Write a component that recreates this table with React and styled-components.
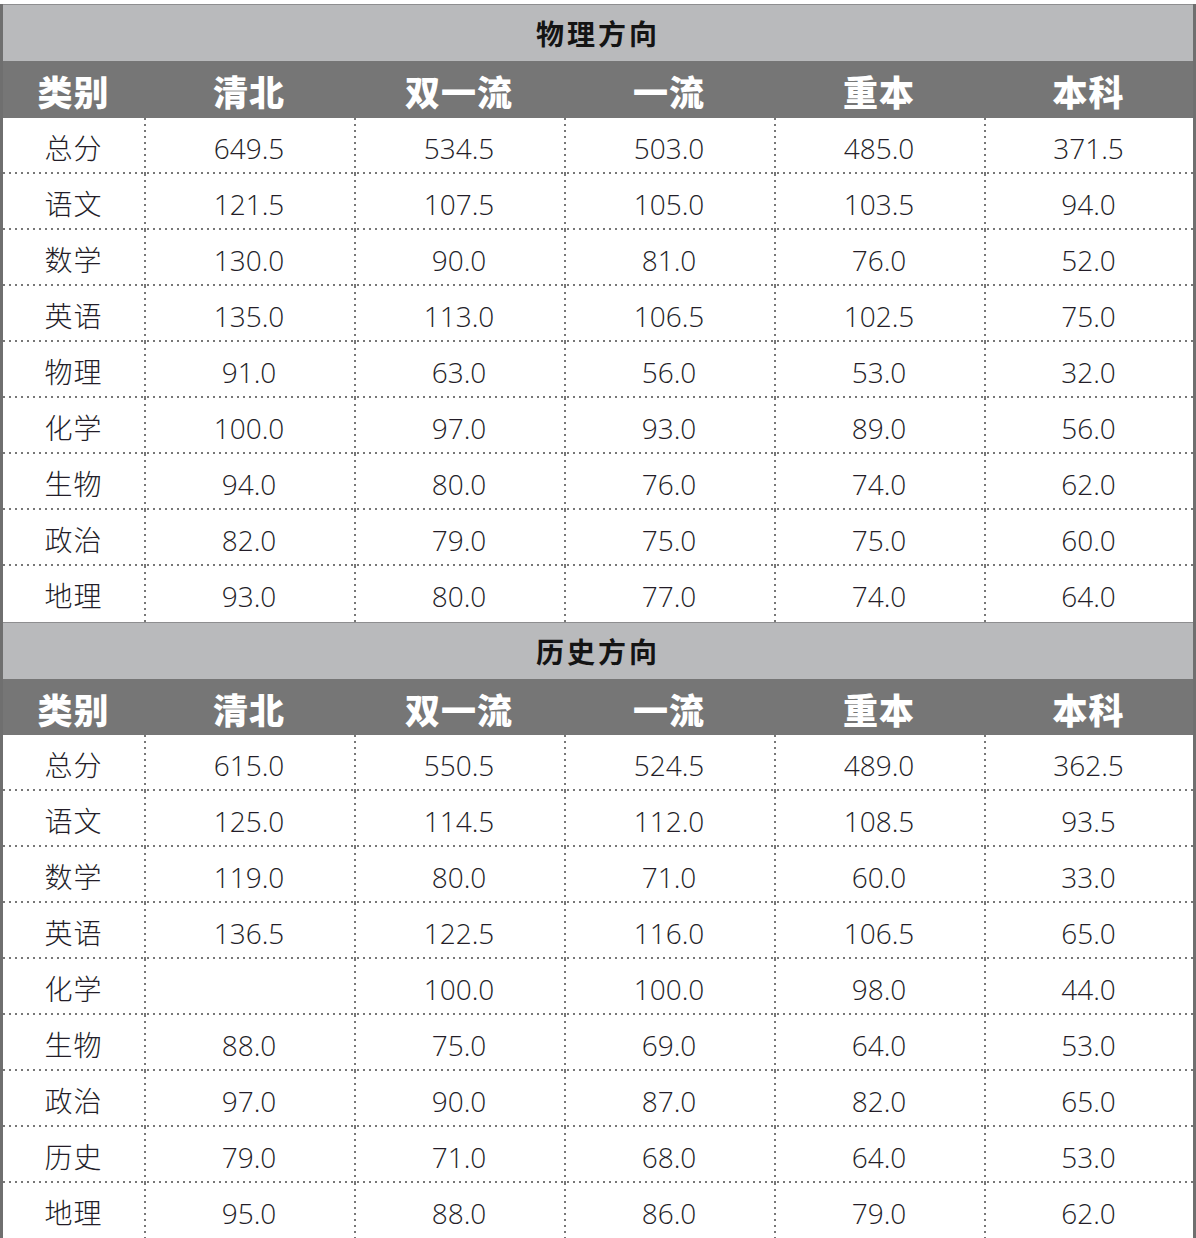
import React from "react";
import styled, { createGlobalStyle } from "styled-components";

const GlobalStyle = createGlobalStyle`
  html, body {
    margin: 0;
    padding: 0;
    background: #ffffff;
  }
  * {
    box-sizing: border-box;
  }
`;

const Page = styled.div`
  width: 1196px;
  height: 1238px;
  overflow: hidden;
  padding-top: 4px;
  background: #ffffff;
  font-family: "Noto Sans CJK SC", "Noto Sans", sans-serif;
`;

const Frame = styled.div`
  border-left: 3px solid #6f6f6f;
  border-right: 3px solid #6f6f6f;
`;

const TitleBar = styled.div`
  height: 57px;
  background: #b9babc;
  border-top: 1px solid #8e8e90;
  display: flex;
  align-items: center;
  justify-content: center;
  font-size: 28px;
  font-weight: 700;
  letter-spacing: 3px;
  color: #141414;
`;

const Grid = styled.div`
  display: grid;
  grid-template-columns: 141px repeat(4, 210px) 1fr;
`;

const HeaderRow = styled(Grid)`
  height: ${(props) => props.$height}px;
  background: #767676;
`;

const HeaderCell = styled.div`
  display: flex;
  align-items: center;
  justify-content: center;
  color: #ffffff;
  font-size: 35px;
  font-weight: 900;
  letter-spacing: 1px;
  padding-top: 2px;
`;

const Row = styled(Grid)`
  height: 56px;
  background-image: ${(props) =>
    props.$last
      ? "none"
      : "repeating-linear-gradient(to right, #777 0 2px, transparent 2px 6px)"};
  background-size: 100% 2px;
  background-position: left bottom;
  background-repeat: no-repeat;
`;

const Cell = styled.div`
  display: flex;
  align-items: center;
  justify-content: center;
  font-family: "Open Sans", "Noto Sans CJK SC", sans-serif;
  font-size: 28px;
  font-weight: 300;
  color: #231d28;
  padding-top: 3px;
  background-image: ${(props) =>
    props.$first
      ? "none"
      : "repeating-linear-gradient(to bottom, #777 0 2px, transparent 2px 6px)"};
  background-size: 2px 100%;
  background-position: left top;
  background-repeat: no-repeat;
`;

const LabelCell = styled(Cell)`
  font-family: "Noto Sans CJK SC", sans-serif;
  letter-spacing: 1px;
  padding-top: 2px;
`;

const columns = ["类别", "清北", "双一流", "一流", "重本", "本科"];

const physics = [
  ["总分", "649.5", "534.5", "503.0", "485.0", "371.5"],
  ["语文", "121.5", "107.5", "105.0", "103.5", "94.0"],
  ["数学", "130.0", "90.0", "81.0", "76.0", "52.0"],
  ["英语", "135.0", "113.0", "106.5", "102.5", "75.0"],
  ["物理", "91.0", "63.0", "56.0", "53.0", "32.0"],
  ["化学", "100.0", "97.0", "93.0", "89.0", "56.0"],
  ["生物", "94.0", "80.0", "76.0", "74.0", "62.0"],
  ["政治", "82.0", "79.0", "75.0", "75.0", "60.0"],
  ["地理", "93.0", "80.0", "77.0", "74.0", "64.0"],
];

const history = [
  ["总分", "615.0", "550.5", "524.5", "489.0", "362.5"],
  ["语文", "125.0", "114.5", "112.0", "108.5", "93.5"],
  ["数学", "119.0", "80.0", "71.0", "60.0", "33.0"],
  ["英语", "136.5", "122.5", "116.0", "106.5", "65.0"],
  ["化学", "", "100.0", "100.0", "98.0", "44.0"],
  ["生物", "88.0", "75.0", "69.0", "64.0", "53.0"],
  ["政治", "97.0", "90.0", "87.0", "82.0", "65.0"],
  ["历史", "79.0", "71.0", "68.0", "64.0", "53.0"],
  ["地理", "95.0", "88.0", "86.0", "79.0", "62.0"],
];

const Section = ({ title, rows, headerHeight }) => (
  <>
    <TitleBar>{title}</TitleBar>
    <HeaderRow $height={headerHeight}>
      {columns.map((c) => (
        <HeaderCell key={c}>{c}</HeaderCell>
      ))}
    </HeaderRow>
    {rows.map((row, i) => (
      <Row key={row[0]} $last={i === rows.length - 1}>
        {row.map((value, j) =>
          j === 0 ? (
            <LabelCell key={j} $first>
              {value}
            </LabelCell>
          ) : (
            <Cell key={j}>{value}</Cell>
          )
        )}
      </Row>
    ))}
  </>
);

const App = () => (
  <Page>
    <GlobalStyle />
    <Frame>
      <Section title="物理方向" rows={physics} headerHeight={57} />
      <Section title="历史方向" rows={history} headerHeight={56} />
    </Frame>
  </Page>
);

export default App;
